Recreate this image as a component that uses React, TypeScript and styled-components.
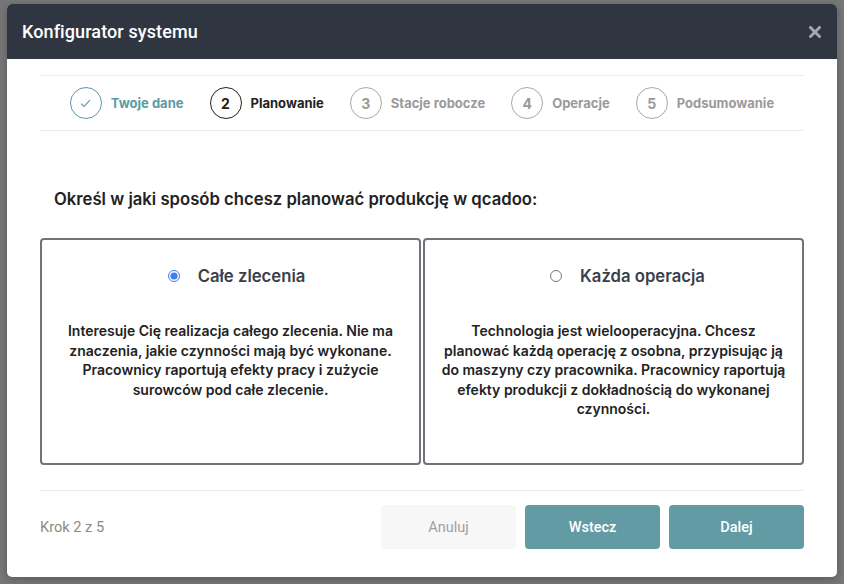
import React, { useState } from "react";
import styled, { createGlobalStyle } from "styled-components";

const Global = createGlobalStyle`
  html, body { margin: 0; padding: 0; background: #777777; }
  body { font-family: Inter, "Noto Sans", sans-serif; }
  * { box-sizing: border-box; }
`;

const Backdrop = styled.div`
  width: 844px;
  height: 584px;
  padding: 4px 7px 7px 7px;
`;

const Modal = styled.div`
  width: 830px;
  height: 573px;
  background: #ffffff;
  border-radius: 5px;
  overflow: hidden;
  display: flex;
  flex-direction: column;
  box-shadow: 0 2px 8px rgba(0, 0, 0, 0.25);
`;

const Header = styled.div`
  height: 55px;
  flex: none;
  background: #2f3641;
  display: flex;
  align-items: center;
  justify-content: space-between;
  padding: 0 14px 0 15px;
`;

const Title = styled.h1`
  margin: 0;
  font-family: Roboto, "Liberation Sans", sans-serif;
  font-weight: 500;
  font-size: 18px;
  color: #ffffff;
  letter-spacing: 0.1px;
`;

const Close = styled.button`
  border: 0;
  background: transparent;
  padding: 0;
  width: 16px;
  height: 16px;
  display: flex;
  align-items: center;
  justify-content: center;
  cursor: pointer;
`;

const Body = styled.div`
  flex: 1;
  display: flex;
  flex-direction: column;
  padding: 16px 33px 28px 33px;
`;

const Stepper = styled.div`
  height: 56px;
  border-top: 1px solid #ebebeb;
  border-bottom: 1px solid #ebebeb;
  display: flex;
  align-items: center;
  justify-content: center;
  gap: 26px;
`;

const Step = styled.div`
  display: flex;
  align-items: center;
  gap: 9px;
`;

type StepState = "done" | "active" | "todo";

const Circle = styled.div<{ $state: StepState }>`
  width: 32px;
  height: 32px;
  border-radius: 50%;
  border: 1px solid
    ${(p) => (p.$state === "done" ? "#5b9aa5" : p.$state === "active" ? "#222222" : "#a9a9a9")};
  display: flex;
  align-items: center;
  justify-content: center;
  font-size: 14px;
  font-weight: 700;
  color: ${(p) => (p.$state === "active" ? "#222222" : "#9a9a9a")};
`;

const StepLabel = styled.span<{ $state: StepState }>`
  font-size: 13px;
  font-weight: 700;
  color: ${(p) => (p.$state === "done" ? "#5b9aa5" : p.$state === "active" ? "#222222" : "#9a9a9a")};
`;

const Question = styled.h2`
  margin: 57px 0 0 14px;
  font-size: 16.7px;
  font-weight: 600;
  color: #222222;
  line-height: 22px;
`;

const Cards = styled.div`
  margin-top: 28px;
  display: grid;
  grid-template-columns: 1fr 1fr;
  gap: 2px;
`;

const Card = styled.label`
  height: 227px;
  border: 2px solid #6e737c;
  border-radius: 4px;
  display: flex;
  flex-direction: column;
  align-items: center;
  padding: 23px 12px 0 12px;
  cursor: pointer;
`;

const CardHead = styled.div<{ $shift?: number }>`
  display: flex;
  align-items: center;
  gap: 18px;
  height: 26px;
  margin-left: ${(p) => p.$shift ?? 0}px;
`;

const Radio = styled.input`
  margin: 0;
  width: 12px;
  height: 12px;
  accent-color: #3d7df5;
`;

const CardTitle = styled.span`
  font-size: 16.7px;
  font-weight: 600;
  color: #3a3f4a;
`;

const CardText = styled.p`
  margin: 32px 0 0 0;
  text-align: center;
  font-size: 14px;
  font-weight: 600;
  line-height: 19.5px;
  color: #222222;
`;

const Footer = styled.div`
  margin-top: 25px;
  border-top: 1px solid #ebebeb;
  padding-top: 14px;
  display: flex;
  align-items: center;
  justify-content: space-between;
`;

const StepInfo = styled.span`
  font-family: Roboto, "Liberation Sans", sans-serif;
  font-size: 14.6px;
  color: #8a8a8a;
`;

const Buttons = styled.div`
  display: flex;
  gap: 9px;
`;

const Button = styled.button<{ $primary?: boolean }>`
  width: 135px;
  height: 44px;
  border: 0;
  border-radius: 4px;
  font-family: Roboto, "Liberation Sans", sans-serif;
  font-size: 14.5px;
  font-weight: ${(p) => (p.$primary ? 500 : 400)};
  background: ${(p) => (p.$primary ? "#639ba5" : "#f7f7f7")};
  color: ${(p) => (p.$primary ? "#ffffff" : "#a0a0a0")};
  cursor: pointer;
`;

const steps: { n: string; label: string; state: StepState }[] = [
  { n: "✓", label: "Twoje dane", state: "done" },
  { n: "2", label: "Planowanie", state: "active" },
  { n: "3", label: "Stacje robocze", state: "todo" },
  { n: "4", label: "Operacje", state: "todo" },
  { n: "5", label: "Podsumowanie", state: "todo" },
];

export default function App() {
  const [mode, setMode] = useState("orders");
  return (
    <>
      <Global />
      <Backdrop>
        <Modal>
          <Header>
            <Title>Konfigurator systemu</Title>
            <Close aria-label="Zamknij">
              <svg width="12" height="12" viewBox="0 0 12 12">
                <path d="M1.5 1.5 L10.5 10.5 M10.5 1.5 L1.5 10.5" stroke="#a3a7ad" strokeWidth="3" strokeLinecap="round" />
              </svg>
            </Close>
          </Header>
          <Body>
            <Stepper>
              {steps.map((s) => (
                <Step key={s.label}>
                  <Circle $state={s.state}>
                    {s.state === "done" ? (
                      <svg width="11" height="9" viewBox="0 0 11 9">
                        <path d="M1 4.6 L4 7.4 L10 1.2" fill="none" stroke="#5b9aa5" strokeWidth="1.1" />
                      </svg>
                    ) : (
                      s.n
                    )}
                  </Circle>
                  <StepLabel $state={s.state}>{s.label}</StepLabel>
                </Step>
              ))}
            </Stepper>
            <Question>Określ w jaki sposób chcesz planować produkcję w qcadoo:</Question>
            <Cards>
              <Card>
                <CardHead $shift={12}>
                  <Radio type="radio" name="mode" checked={mode === "orders"} onChange={() => setMode("orders")} />
                  <CardTitle>Całe zlecenia</CardTitle>
                </CardHead>
                <CardText>
                  Interesuje Cię realizacja całego zlecenia. Nie ma znaczenia, jakie czynności mają być wykonane.
                  Pracownicy raportują efekty pracy i zużycie surowców pod całe zlecenie.
                </CardText>
              </Card>
              <Card>
                <CardHead $shift={28}>
                  <Radio type="radio" name="mode" checked={mode === "ops"} onChange={() => setMode("ops")} />
                  <CardTitle>Każda operacja</CardTitle>
                </CardHead>
                <CardText>
                  Technologia jest wielooperacyjna. Chcesz planować każdą operację z osobna, przypisując ją do
                  maszyny czy pracownika. Pracownicy raportują efekty produkcji z dokładnością do wykonanej
                  czynności.
                </CardText>
              </Card>
            </Cards>
            <Footer>
              <StepInfo>Krok 2 z 5</StepInfo>
              <Buttons>
                <Button>Anuluj</Button>
                <Button $primary>Wstecz</Button>
                <Button $primary>Dalej</Button>
              </Buttons>
            </Footer>
          </Body>
        </Modal>
      </Backdrop>
    </>
  );
}
